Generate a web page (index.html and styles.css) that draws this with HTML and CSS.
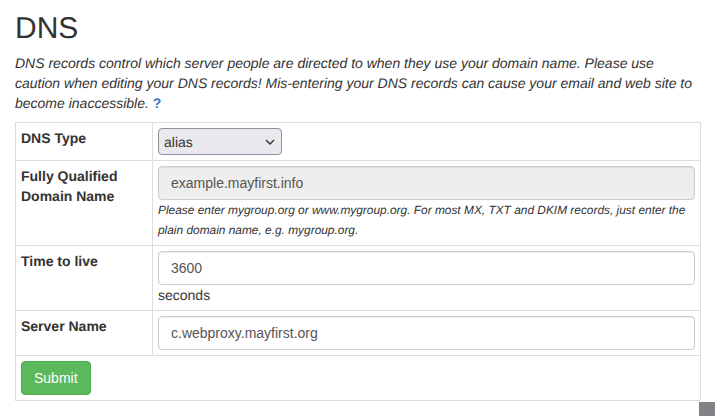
FILE: index.html
```html
<!DOCTYPE html>
<html lang="en">
<head>
    <meta charset="UTF-8">
    <title>DNS</title>
    <link rel="stylesheet" href="styles.css">
</head>
<body>
<div class="page">
    <h1>DNS</h1>
    <p class="intro"><em>DNS records control which server people are directed to when they use your domain name. Please use caution when editing your DNS records! Mis-entering your DNS records can cause your email and web site to become inaccessible.</em> <a class="help" href="#">?</a></p>
    <form>
        <table class="dns-form">
            <tr>
                <th>DNS Type</th>
                <td>
                    <div class="select-box">
                        <span>alias</span>
                        <svg class="chevron" width="10" height="6" viewBox="0 0 10 6"><path d="M1 1l4 4 4-4" fill="none" stroke="#333" stroke-width="1.4"/></svg>
                    </div>
                </td>
            </tr>
            <tr>
                <th>Fully Qualified Domain Name</th>
                <td>
                    <input class="field" type="text" value="example.mayfirst.info" disabled>
                    <div class="hint"><em>Please enter mygroup.org or www.mygroup.org. For most MX, TXT and DKIM records, just enter the plain domain name, e.g. mygroup.org.</em></div>
                </td>
            </tr>
            <tr>
                <th>Time to live</th>
                <td>
                    <input class="field" type="text" value="3600">
                    <div>seconds</div>
                </td>
            </tr>
            <tr>
                <th>Server Name</th>
                <td><input class="field" type="text" value="c.webproxy.mayfirst.org"></td>
            </tr>
            <tr>
                <td colspan="2"><button class="btn-submit" type="button">Submit</button></td>
            </tr>
        </table>
    </form>
</div>
<div class="corner"></div>
</body>
</html>
```

FILE: styles.css
```css
html, body {
    margin: 0;
    height: 416px;
    overflow: hidden;
    background: #fff;
}
body {
    font-family: "Liberation Sans", Arial, sans-serif;
    font-size: 14px;
    line-height: 20px;
    color: #333;
    text-rendering: geometricPrecision;
}
* {
    box-sizing: border-box;
}
.page {
    padding: 0 14px 0 15px;
}
h1 {
    margin: 0;
    padding-top: 12px;
    height: 53px;
    font-size: 30px;
    font-weight: 400;
    line-height: 33px;
}
.intro {
    margin: 0 0 9px;
    padding-right: 5px;
}
.help {
    color: #337ab7;
    font-weight: 700;
    text-decoration: none;
}
.dns-form {
    width: 686px;
    border-collapse: collapse;
    table-layout: fixed;
}
.dns-form th, .dns-form td {
    border: 1px solid #ddd;
    padding: 5px;
    vertical-align: top;
    text-align: left;
}
.dns-form th {
    width: 137px;
    font-weight: 700;
}
.select-box {
    display: flex;
    align-items: center;
    justify-content: space-between;
    width: 124px;
    height: 27px;
    padding: 0 6px 0 5px;
    background: #e9e9ed;
    border: 1px solid #8f8f9d;
    border-radius: 4px;
}
.field {
    display: block;
    width: 100%;
    height: 34px;
    padding: 6px 12px;
    font: inherit;
    color: #555;
    background: #fff;
    border: 1px solid #ccc;
    border-radius: 4px;
    box-shadow: inset 0 1px 1px rgba(0, 0, 0, .075);
}
.field:disabled {
    background: #eee;
    opacity: 1;
}
.hint {
    font-size: 11.9px;
    line-height: 20px;
}
.btn-submit {
    display: block;
    height: 34px;
    padding: 6px 12px;
    font: inherit;
    color: #fff;
    background: #5cb85c;
    border: 1px solid #4cae4c;
    border-radius: 4px;
}
.corner {
    position: absolute;
    left: 699px;
    top: 402px;
    width: 16px;
    height: 14px;
    background: #808285;
}
```
